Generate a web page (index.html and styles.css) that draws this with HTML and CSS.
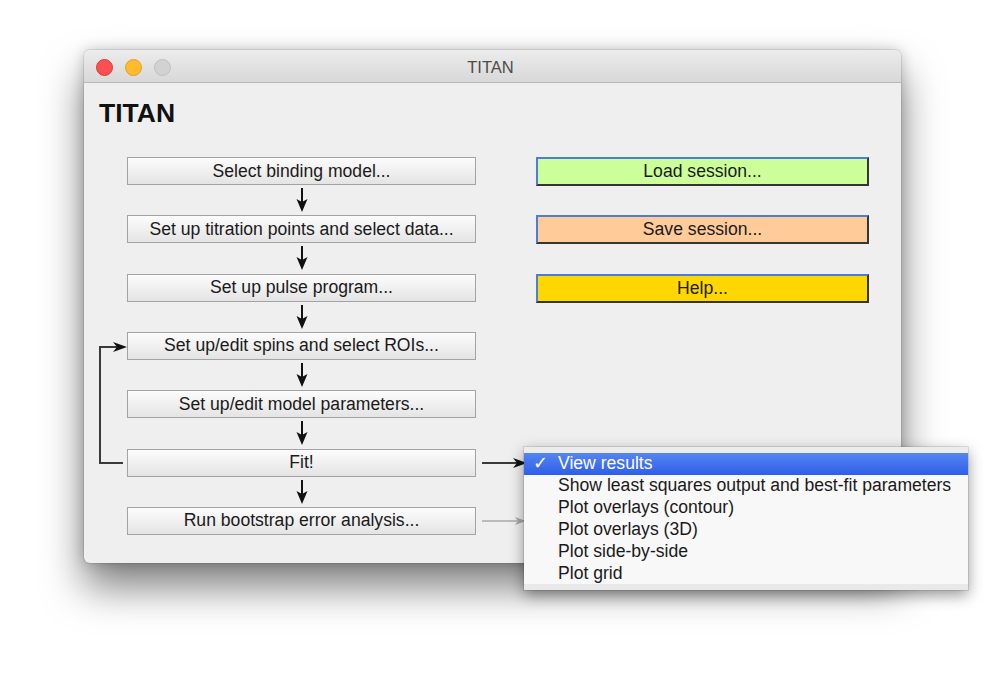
FILE: index.html
```html
<!DOCTYPE html>
<html>
<head>
<meta charset="utf-8">
<link rel="stylesheet" href="styles.css">
</head>
<body>
<div class="stage">
  <div class="window">
    <div class="titlebar">
      <div class="lights">
        <span class="light red"></span>
        <span class="light yellow"></span>
        <span class="light grey"></span>
      </div>
      <div class="wtitle">TITAN</div>
    </div>
    <div class="content">
      <h1 class="heading">TITAN</h1>
      <div class="columns">
        <div class="flow">
          <div class="btn">Select binding model...</div>
          <div class="down"><svg width="14" height="30" viewBox="0 0 14 30"><line x1="7" y1="3" x2="7" y2="18" stroke="#111" stroke-width="2"/><path d="M1.5 14 L7 27 L12.5 14 L7 17 Z" fill="#111"/></svg></div>
          <div class="btn">Set up titration points and select data...</div>
          <div class="down"><svg width="14" height="30" viewBox="0 0 14 30"><line x1="7" y1="3" x2="7" y2="18" stroke="#111" stroke-width="2"/><path d="M1.5 14 L7 27 L12.5 14 L7 17 Z" fill="#111"/></svg></div>
          <div class="btn">Set up pulse program...</div>
          <div class="down"><svg width="14" height="30" viewBox="0 0 14 30"><line x1="7" y1="3" x2="7" y2="18" stroke="#111" stroke-width="2"/><path d="M1.5 14 L7 27 L12.5 14 L7 17 Z" fill="#111"/></svg></div>
          <div class="btn">Set up/edit spins and select ROIs...</div>
          <div class="down"><svg width="14" height="30" viewBox="0 0 14 30"><line x1="7" y1="3" x2="7" y2="18" stroke="#111" stroke-width="2"/><path d="M1.5 14 L7 27 L12.5 14 L7 17 Z" fill="#111"/></svg></div>
          <div class="btn">Set up/edit model parameters...</div>
          <div class="down"><svg width="14" height="30" viewBox="0 0 14 30"><line x1="7" y1="3" x2="7" y2="18" stroke="#111" stroke-width="2"/><path d="M1.5 14 L7 27 L12.5 14 L7 17 Z" fill="#111"/></svg></div>
          <div class="btn">Fit!</div>
          <div class="down"><svg width="14" height="30" viewBox="0 0 14 30"><line x1="7" y1="3" x2="7" y2="18" stroke="#111" stroke-width="2"/><path d="M1.5 14 L7 27 L12.5 14 L7 17 Z" fill="#111"/></svg></div>
          <div class="btn">Run bootstrap error analysis...</div>
        </div>
        <div class="side">
          <div class="sbtn load">Load session...</div>
          <div class="sbtn save">Save session...</div>
          <div class="sbtn help">Help...</div>
        </div>
      </div>
    </div>
  </div>

  <svg class="connectors" width="1000" height="677" viewBox="0 0 1000 677">
    <polyline points="123,463 100,463 100,347 118,347" fill="none" stroke="#3a3a3a" stroke-width="2"/>
    <path d="M113 342 L127 347 L113 352 L117 347 Z" fill="#111"/>
    <line x1="482" y1="463" x2="518" y2="463" stroke="#3a3a3a" stroke-width="2"/>
    <path d="M513 458 L527 463 L513 468 L517 463 Z" fill="#111"/>
    <line x1="482" y1="521" x2="518" y2="521" stroke="#aaa" stroke-width="1.5"/>
    <path d="M515 517 L526 521 L515 525 L518 521 Z" fill="#aaa"/>
  </svg>

  <div class="menu">
    <div class="item selected"><span class="check">✓</span>View results</div>
    <div class="item">Show least squares output and best-fit parameters</div>
    <div class="item">Plot overlays (contour)</div>
    <div class="item">Plot overlays (3D)</div>
    <div class="item">Plot side-by-side</div>
    <div class="item">Plot grid</div>
  </div>
</div>
</body>
</html>
```

FILE: styles.css
```css
* { box-sizing: border-box; }
html, body { margin: 0; padding: 0; background: #ffffff; }
body { font-family: "Liberation Sans", Arial, Helvetica, sans-serif; color: #1a1a1a; }

.stage { position: relative; width: 1000px; height: 677px; overflow: hidden; padding-top: 50px; padding-left: 84px; }

.window {
  width: 817px; height: 513px;
  background: #efefef;
  border-radius: 6px;
  box-shadow: 0 24px 40px rgba(0,0,0,0.5), 0 0 14px rgba(0,0,0,0.2), 0 0 0 1px rgba(0,0,0,0.08);
  overflow: hidden;
}

.titlebar {
  height: 33px;
  background: linear-gradient(#ececec, #d8d8d8);
  border-bottom: 1px solid #b8b8b8;
  display: flex; align-items: center;
  position: relative;
}
.lights { display: flex; gap: 12px; padding-left: 12px; padding-top: 2px; }
.light { width: 17px; height: 17px; border-radius: 50%; display: block; }
.light.red { background: #fc4f52; border: 1px solid #e03a3d; }
.light.yellow { background: #fdbb2d; border: 1px solid #e0a021; }
.light.grey { background: #d2d2d2; border: 1px solid #c0c0c0; }
.wtitle { position: absolute; left: 0; right: 0; top: 3px; bottom: 0; display: flex; align-items: center; justify-content: center; font-size: 16.5px; color: #4c4c4c; padding-right: 4px; }

.content { padding: 17px 0 0 15px; }
.heading { margin: 0; font-size: 26.5px; line-height: 26px; font-weight: bold; color: #111; }

.columns { display: grid; grid-template-columns: 349px 333px; column-gap: 60px; margin-top: 31px; padding-left: 28px; }

.flow { display: flex; flex-direction: column; }
.btn {
  height: 28px;
  border: 1px solid #a3a3a3;
  background: linear-gradient(#fcfcfc, #e4e4e4);
  display: flex; align-items: center; justify-content: center;
  font-size: 17.6px; color: #1a1a1a;
}
.down { height: 30.33px; display: flex; justify-content: center; }
.down svg { display: block; }

.side { display: flex; flex-direction: column; gap: 29.33px; }
.sbtn {
  height: 29px;
  border-top: 2px solid #4a7ed8; border-left: 2px solid #4a7ed8;
  border-right: 2px solid #353535; border-bottom: 2px solid #353535;
  display: flex; align-items: center; justify-content: center;
  font-size: 17.6px; color: #1a1a1a;
}
.load { background: #ccff99; }
.save { background: #ffcc99; }
.help { background: #ffd700; }

.connectors { position: absolute; left: 0; top: 0; pointer-events: none; }

.menu {
  position: absolute; left: 524px; top: 447px; width: 444px; height: 143px;
  background: #f8f8f8;
  border-top: 6px solid #ececec;
  border-bottom: 6px solid #e9e9e9;
  box-shadow: 0 5px 14px rgba(0,0,0,0.42), 0 0 0 1px rgba(0,0,0,0.1);
}
.item { height: 21.83px; display: flex; align-items: center; padding-left: 34px; font-size: 17.6px; color: #1a1a1a; position: relative; white-space: nowrap; }
.item.selected { background: linear-gradient(#5585f1, #2e5ee8); color: #ffffff; }
.check { position: absolute; left: 9px; top: 0; bottom: 0; display: flex; align-items: center; font-size: 17.6px; }
```
